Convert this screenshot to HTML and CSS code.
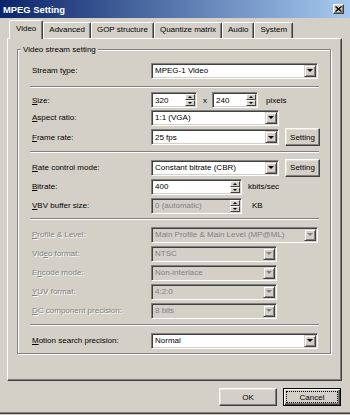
FILE: index.html
```html
<!DOCTYPE html>
<html lang="en">
<head>
  <meta charset="UTF-8">
  <title>MPEG Setting</title>
  <link rel="stylesheet" href="styles.css">
</head>
<body>
  <div class="window">
    <div class="titlebar">
      <span class="title">MPEG Setting</span>
      <span class="close-btn">
        <svg width="7" height="6" viewBox="0 0 7 6"><path d="M0.5 0.5 L6.5 5.5 M6.5 0.5 L0.5 5.5" stroke="#000" stroke-width="1.4"/></svg>
      </span>
    </div>

    <div class="tabs">
      <div class="tab active">Video</div>
      <div class="tab">Advanced</div>
      <div class="tab">GOP structure</div>
      <div class="tab">Quantize matrix</div>
      <div class="tab">Audio</div>
      <div class="tab">System</div>
    </div>

    <div class="panel">
      <div class="group">
        <span class="group-label">Video stream setting</span>

        <div class="row">
          <span class="lbl">Stream t<u>y</u>pe:</span>
          <div class="combo w-full"><span class="val">MPEG-1 Video</span><span class="drop"></span></div>
        </div>

        <div class="sep sep-first"></div>

        <div class="row h18">
          <span class="lbl"><u>S</u>ize:</span>
          <div class="spin w-small"><span class="val">320</span><span class="spin-btn"><span class="up"></span><span class="down"></span></span></div>
          <span class="times">x</span>
          <div class="spin w-small"><span class="val">240</span><span class="spin-btn"><span class="up"></span><span class="down"></span></span></div>
          <span class="unit pixels">pixels</span>
        </div>

        <div class="row h17">
          <span class="lbl"><u>A</u>spect ratio:</span>
          <div class="combo w-mid"><span class="val">1:1 (VGA)</span><span class="drop"></span></div>
        </div>

        <div class="row h22">
          <span class="lbl"><u>F</u>rame rate:</span>
          <div class="combo w-mid"><span class="val">25 fps</span><span class="drop"></span></div>
          <button class="btn setting">Setting</button>
        </div>

        <div class="sep"></div>

        <div class="row">
          <span class="lbl"><u>R</u>ate control mode:</span>
          <div class="combo w-mid"><span class="val">Constant bitrate (CBR)</span><span class="drop"></span></div>
          <button class="btn setting">Setting</button>
        </div>

        <div class="row">
          <span class="lbl"><u>B</u>itrate:</span>
          <div class="spin w-wide"><span class="val">400</span><span class="spin-btn"><span class="up"></span><span class="down"></span></span></div>
          <span class="unit">kbits/sec</span>
        </div>

        <div class="row">
          <span class="lbl"><u>V</u>BV buffer size:</span>
          <div class="spin w-wide off"><span class="val">0 (automatic)</span><span class="spin-btn"><span class="up"></span><span class="down"></span></span></div>
          <span class="unit kb">KB</span>
        </div>

        <div class="sep"></div>

        <div class="row">
          <span class="lbl off"><u>P</u>rofile &amp; Level:</span>
          <div class="combo w-full off"><span class="val">Main Profile &amp; Main Level (MP@ML)</span><span class="drop"></span></div>
        </div>

        <div class="row">
          <span class="lbl off">Vid<u>e</u>o format:</span>
          <div class="combo w-narrow off"><span class="val">NTSC</span><span class="drop"></span></div>
        </div>

        <div class="row">
          <span class="lbl off">E<u>n</u>code mode:</span>
          <div class="combo w-narrow off"><span class="val">Non-interlace</span><span class="drop"></span></div>
        </div>

        <div class="row">
          <span class="lbl off"><u>Y</u>UV format:</span>
          <div class="combo w-narrow off"><span class="val">4:2:0</span><span class="drop"></span></div>
        </div>

        <div class="row">
          <span class="lbl off"><u>D</u>C component precision:</span>
          <div class="combo w-narrow off"><span class="val">8 bits</span><span class="drop"></span></div>
        </div>

        <div class="sep sep-last"></div>

        <div class="row">
          <span class="lbl"><u>M</u>otion search precision:</span>
          <div class="combo w-full"><span class="val">Normal</span><span class="drop"></span></div>
        </div>
      </div>
    </div>

    <div class="footer">
      <button class="btn action">OK</button>
      <button class="btn action default">Cancel</button>
    </div>
  </div>
</body>
</html>
```

FILE: styles.css
```css
* {
  box-sizing: border-box;
}

body {
  margin: 0;
  font-family: "Liberation Sans", Arial, sans-serif;
  font-size: 8px;
  color: #000;
  background: #d4d0c8;
}

.window {
  width: 350px;
  height: 414px;
  background: #d4d0c8;
  border-bottom: 1px solid #404040;
  box-shadow: inset 0 -1px #808080;
}

/* title bar */
.titlebar {
  height: 18px;
  display: flex;
  align-items: center;
  justify-content: space-between;
  padding: 0 6px 0 3px;
  background: linear-gradient(to right, #0a246a, #a6caf0);
  color: #fff;
}

.title {
  font-weight: bold;
  font-size: 9.4px;
}

.close-btn {
  width: 11px;
  height: 10px;
  display: flex;
  align-items: center;
  justify-content: center;
  background: #d4d0c8;
  border: 1px solid;
  border-color: #fff #404040 #404040 #fff;
  box-shadow: inset -1px -1px #808080;
}

/* tabs */
.tabs {
  display: flex;
  align-items: flex-end;
  height: 18px;
  margin-top: 2px;
  padding-left: 9px;
  position: relative;
  z-index: 1;
}

.tab {
  height: 16px;
  line-height: 14px;
  padding: 0 5px;
  border: 1px solid;
  border-bottom: none;
  border-color: #fff #404040 transparent #fff;
  box-shadow: inset -1px 0 #808080;
  border-radius: 2px 2px 0 0;
}

.tab.active {
  height: 19px;
  margin-bottom: -1px;
  line-height: 15px;
  padding: 0 6px;
  background: #d4d0c8;
}

/* tab page */
.panel {
  height: 343px;
  margin: 0 8px 0 7px;
  padding: 10px 10px 0 9px;
  border: 1px solid;
  border-color: #fff #404040 #404040 #fff;
  box-shadow: inset -1px -1px #808080;
}

.group {
  position: relative;
  height: 305px;
  padding-top: 11px;
  border: 1px solid #808080;
  box-shadow: inset 1px 1px #fff, 1px 1px #fff;
}

.group-label {
  position: absolute;
  top: -6px;
  left: 3px;
  padding: 0 2px;
  line-height: 11px;
  background: #d4d0c8;
}

.row {
  display: flex;
  align-items: center;
  height: 19px;
  padding-left: 14px;
}

.row.h18 { height: 18px; }
.row.h17 { height: 17px; }
.row.h22 { height: 22px; }

.lbl {
  width: 119px;
  flex-shrink: 0;
}

.lbl.off {
  color: #808080;
  text-shadow: 1px 1px #fff;
}

.sep {
  height: 2px;
  margin: 3px 11px 5px 12px;
  border-top: 1px solid #808080;
  border-bottom: 1px solid #fff;
}

.sep-first { margin-top: 6px; margin-bottom: 3px; }
.sep-last { margin-top: 4px; }

/* combo boxes and spin fields */
.combo, .spin {
  display: flex;
  align-items: center;
  height: 16px;
  padding: 1px 1px 1px 3px;
  background: #fff;
  border: 1px solid;
  border-color: #808080 #fff #fff #808080;
  box-shadow: inset 1px 1px #404040, inset -1px -1px #d4d0c8;
  white-space: nowrap;
  overflow: hidden;
}

.combo .val, .spin .val {
  flex: 1;
}

.combo.off, .spin.off {
  background: #d4d0c8;
  color: #808080;
}

.w-full { width: 167px; }
.w-mid { width: 128px; }
.w-narrow { width: 126px; }
.w-small { width: 46px; }
.w-wide { width: 91px; }

.drop {
  width: 12px;
  height: 12px;
  display: flex;
  align-items: center;
  justify-content: center;
  background: #d4d0c8;
  border: 1px solid;
  border-color: #d4d0c8 #404040 #404040 #d4d0c8;
  box-shadow: inset 1px 1px #fff, inset -1px -1px #808080;
}

.drop::after {
  content: "";
  border-left: 3px solid transparent;
  border-right: 3px solid transparent;
  border-top: 3px solid #000;
}

.combo.off .drop::after {
  border-top-color: #808080;
}

.spin-btn {
  width: 10px;
  height: 12px;
  display: flex;
  flex-direction: column;
}

.spin-btn span {
  flex: 1;
  display: flex;
  align-items: center;
  justify-content: center;
  background: #d4d0c8;
  border: 1px solid;
  border-color: #fff #404040 #404040 #fff;
}

.spin-btn .up::after {
  content: "";
  border-left: 2px solid transparent;
  border-right: 2px solid transparent;
  border-bottom: 2px solid #000;
}

.spin-btn .down::after {
  content: "";
  border-left: 2px solid transparent;
  border-right: 2px solid transparent;
  border-top: 2px solid #000;
}

.times {
  margin: 0 5px 0 6px;
}

.unit {
  margin-left: 6px;
}

.unit.pixels { margin-left: 8px; }
.unit.kb { margin-left: 10px; }

/* buttons */
.btn {
  font: inherit;
  color: #000;
  padding: 0;
  background: #d4d0c8;
  border: 1px solid;
  border-color: #fff #404040 #404040 #fff;
  box-shadow: inset -1px -1px #808080, inset 1px 1px #e4e2dc;
}

.setting {
  width: 35px;
  height: 18px;
  margin-left: 6px;
}

.footer {
  display: flex;
  justify-content: flex-end;
  gap: 6px;
  margin-top: 7px;
  padding-right: 9px;
}

.action {
  width: 58px;
  height: 18px;
}

.action.default {
  border-color: #000;
  box-shadow: inset 1px 1px #fff, inset -1px -1px #404040, inset -2px -2px #808080;
  outline: 1px dotted #000;
  outline-offset: -4px;
}
```
